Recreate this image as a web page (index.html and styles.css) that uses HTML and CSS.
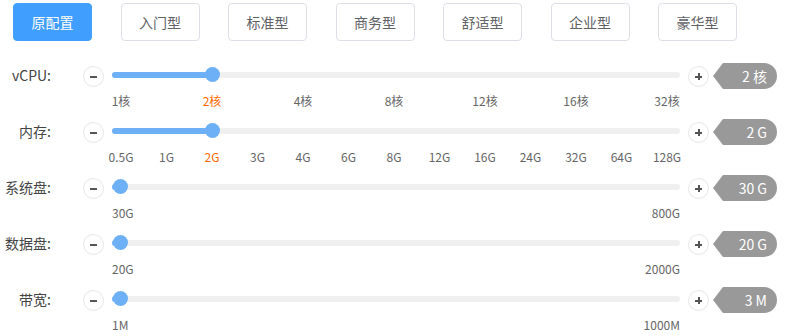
FILE: index.html
```html
<!DOCTYPE html>
<html lang="zh-CN">
<head>
    <meta charset="UTF-8">
    <title>配置选择</title>
    <link rel="stylesheet" href="styles.css">
</head>
<body>
    <div class="presets">
        <button class="preset active">原配置</button>
        <button class="preset">入门型</button>
        <button class="preset">标准型</button>
        <button class="preset">商务型</button>
        <button class="preset">舒适型</button>
        <button class="preset">企业型</button>
        <button class="preset">豪华型</button>
    </div>

    <div class="spec">
        <div class="spec-line">
            <div class="spec-name">vCPU:</div>
            <span class="step minus"></span>
            <div class="track">
                <div class="fill" style="width: 100px"></div>
                <div class="thumb" style="left: 100px"></div>
            </div>
            <span class="step plus"></span>
            <div class="badge">2 核</div>
        </div>
        <div class="marks even">
            <span>1核</span><span class="on">2核</span><span>4核</span><span>8核</span><span>12核</span><span>16核</span><span>32核</span>
        </div>
    </div>

    <div class="spec">
        <div class="spec-line">
            <div class="spec-name">内存:</div>
            <span class="step minus"></span>
            <div class="track">
                <div class="fill" style="width: 100px"></div>
                <div class="thumb" style="left: 100px"></div>
            </div>
            <span class="step plus"></span>
            <div class="badge">2 G</div>
        </div>
        <div class="marks even">
            <span>0.5G</span><span>1G</span><span class="on">2G</span><span>3G</span><span>4G</span><span>6G</span><span>8G</span><span>12G</span><span>16G</span><span>24G</span><span>32G</span><span>64G</span><span>128G</span>
        </div>
    </div>

    <div class="spec">
        <div class="spec-line">
            <div class="spec-name">系统盘:</div>
            <span class="step minus"></span>
            <div class="track">
                <div class="fill" style="width: 8px"></div>
                <div class="thumb" style="left: 8px"></div>
            </div>
            <span class="step plus"></span>
            <div class="badge">30 G</div>
        </div>
        <div class="marks">
            <span>30G</span><span>800G</span>
        </div>
    </div>

    <div class="spec">
        <div class="spec-line">
            <div class="spec-name">数据盘:</div>
            <span class="step minus"></span>
            <div class="track">
                <div class="fill" style="width: 8px"></div>
                <div class="thumb" style="left: 8px"></div>
            </div>
            <span class="step plus"></span>
            <div class="badge">20 G</div>
        </div>
        <div class="marks">
            <span>20G</span><span>2000G</span>
        </div>
    </div>

    <div class="spec">
        <div class="spec-line">
            <div class="spec-name">带宽:</div>
            <span class="step minus"></span>
            <div class="track">
                <div class="fill" style="width: 8px"></div>
                <div class="thumb" style="left: 8px"></div>
            </div>
            <span class="step plus"></span>
            <div class="badge">3 M</div>
        </div>
        <div class="marks">
            <span>1M</span><span>1000M</span>
        </div>
    </div>
</body>
</html>
```

FILE: styles.css
```css
body { margin: 0; background: #fff; font-family: "Noto Sans CJK SC", "Noto Sans", sans-serif; color: #444; }
.presets { display: flex; gap: 28.5px; padding: 3px 0 0 13px; }
.preset { width: 79px; height: 38px; padding: 0; border: 1px solid #dcdfe6; border-radius: 4px; background: #fff; color: #606266; font-family: inherit; font-size: 14px; cursor: pointer; }
.preset.active { background: #409eff; border-color: #409eff; color: #fff; }
.spec { margin-top: 20px; }
.spec + .spec { margin-top: 8px; }
.spec-line { display: flex; align-items: center; height: 27px; }
.spec-name { width: 51px; text-align: right; font-size: 14px; color: #444; margin-right: 32px; }
.step { position: relative; width: 21px; height: 21px; box-sizing: border-box; border: 1px solid #e6e6e6; border-radius: 50%; background: #fff; margin-top: 3px; }
.step::before, .step::after { content: ""; position: absolute; left: 6px; top: 9px; width: 7px; height: 2px; background: #555; }
.plus::after { left: 9px; top: 6px; width: 2px; height: 7px; }
.minus::after { display: none; }
.track { position: relative; width: 568px; height: 6px; margin: 0 8px; border-radius: 3px; background: #f0f0f0; }
.fill { height: 6px; border-radius: 3px; background: #6db0f6; }
.thumb { position: absolute; top: -4.5px; width: 15px; height: 15px; margin-left: -7.5px; border-radius: 50%; background: #6db0f6; }
.badge { position: relative; width: 54px; height: 26px; margin-left: 14px; box-sizing: border-box; padding-right: 10px; border-radius: 0 13px 13px 0; background: #999; color: #fff; font-size: 14px; line-height: 26px; text-align: right; margin-top: 3px; }
.badge::before { content: ""; position: absolute; left: -10px; top: 0; border-right: 10px solid #999; border-top: 13px solid transparent; border-bottom: 13px solid transparent; }
.marks { display: flex; justify-content: space-between; width: 568px; margin: 4px 0 0 112px; font-size: 12px; line-height: 17px; color: #666; }
.marks.even { width: 564px; }
.marks.even span { width: 18px; text-align: center; white-space: nowrap; display: flex; justify-content: center; }
.marks .on { color: #ff6a00; }
```
